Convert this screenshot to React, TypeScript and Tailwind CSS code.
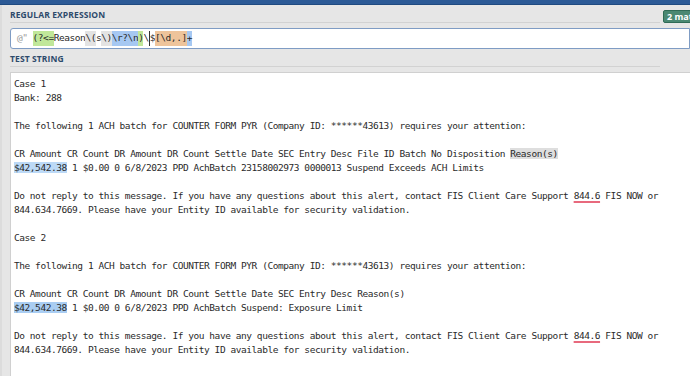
import React from 'react';

const mono = { fontFamily: '"DejaVu Sans Mono", "Liberation Mono", monospace' };
const sans = { fontFamily: '"Open Sans", "Liberation Sans", sans-serif' };

const Hl = ({ c, children }: { c: string; children: React.ReactNode }) => (
  <span className={c}>{children}</span>
);

const SectionLabel = ({ text, badge }: { text: string; badge?: string }) => (
  <div className="flex items-end h-[18px]">
    <div className="w-[650px] shrink-0 h-full flex items-center pt-[4px] border-b border-[#d2d2d2]">
      <span className="text-[8.5px] font-bold tracking-[0.1px] text-[#2d4a6b] uppercase" style={sans}>
        {text}
      </span>
    </div>
    {badge && (
      <div
        className="ml-[3px] shrink-0 h-[13px] px-[3px] rounded-[2px] bg-[#4a8872] border border-[#2f6b56] text-white text-[9px] font-bold leading-[11px] whitespace-nowrap"
        style={sans}
      >
        {badge}
      </div>
    )}
  </div>
);

const Phone = () => (
  <span className="underline decoration-[#e8697d] decoration-[1.5px] underline-offset-[2px]">844.6</span>
);

const Amount = ({ dark }: { dark?: boolean }) => (
  <Hl c={dark ? 'bg-[#a9cdf2]' : 'bg-[#bcd9f6]'}>$42,542.38</Hl>
);

const Block = ({ second }: { second?: boolean }) => (
  <>
    {second ? 'Case 2\n\n' : 'Case 1\nBank: 288\n\n'}
    {'The following 1 ACH batch for COUNTER FORM PYR (Company ID: ******43613) requires your attention:\n\n'}
    {second ? (
      <>
        {'CR Amount CR Count DR Amount DR Count Settle Date SEC Entry Desc Reason(s)\n'}
        <Amount dark />
        {' 1 $0.00 0 6/8/2023 PPD AchBatch Suspend: Exposure Limit\n\n'}
      </>
    ) : (
      <>
        {'CR Amount CR Count DR Amount DR Count Settle Date SEC Entry Desc File ID Batch No Disposition '}
        <Hl c="bg-[#dedede]">Reason(s)</Hl>
        {'\n'}
        <Amount />
        {' 1 $0.00 0 6/8/2023 PPD AchBatch 23158002973 0000013 Suspend Exceeds ACH Limits\n\n'}
      </>
    )}
    {'Do not reply to this message. If you have any questions about this alert, contact FIS Client Care Support '}
    <Phone />
    {' FIS NOW or\n844.634.7669. Please have your Entity ID available for security validation.\n'}
    {second ? '' : '\n'}
  </>
);

export default function App() {
  return (
    <div className="w-[690px] h-[376px] overflow-hidden bg-[#e6e6e6] flex flex-col">
      <div className="h-[5px] bg-[#2c5a96] border-b border-[#1f4a80] shrink-0" />
      <div className="flex-1 flex flex-col pl-[8px] border-l-[2px] border-[#dcdcdc]">
        <SectionLabel text="Regular Expression" badge="2 matches" />
        {/* regex input */}
        <div
          className="mt-[5px] h-[21px] shrink-0 bg-white border border-[#7f9cc4] rounded-l-[3px] flex items-center pl-[6px] text-[#2a2a2a] text-[9.5px] tracking-[-0.44px] whitespace-pre"
          style={mono}
        >
          <span className="text-[#9a9a9a] mr-[5px]">@"</span>
          <Hl c="bg-[#c0e79a]">(?&lt;=</Hl>
          <span>Reason</span>
          <Hl c="bg-[#e3e3e3]">\(</Hl>
          <span>s</span>
          <Hl c="bg-[#e3e3e3]">\)</Hl>
          <Hl c="bg-[#a6c8f2]">\r?\n</Hl>
          <Hl c="bg-[#c0e79a]">)</Hl>
          <span>\</span>
          <span className="border-l border-[#333]">$</span>
          <Hl c="bg-[#eec49b]">[\d,.]</Hl>
          <Hl c="bg-[#a6c8f2]">+</Hl>
        </div>
        <SectionLabel text="Test String" />
        <div className="mt-[5px] flex-1 bg-white border-l border-t border-[#d0d0d0] pl-[3px] pt-[4px]">
          <pre className="text-[9.5px] tracking-[-0.44px] leading-[14px] text-[#2a2a2a] whitespace-pre" style={mono}>
            <Block />
            <Block second />
          </pre>
        </div>
      </div>
    </div>
  );
}
